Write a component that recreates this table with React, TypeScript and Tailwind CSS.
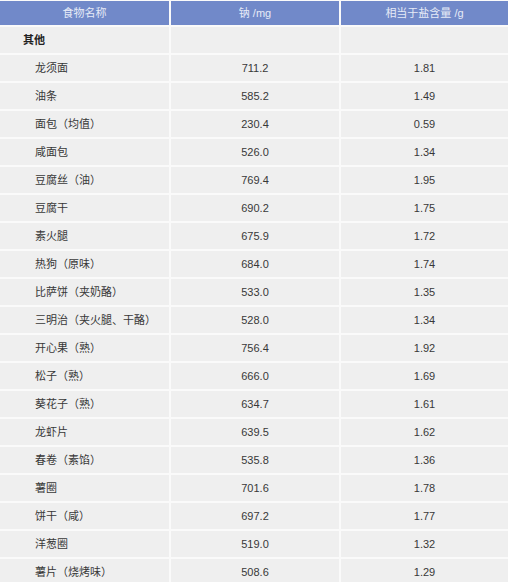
import React from "react";

const rows: [string, string, string][] = [
  ["龙须面", "711.2", "1.81"],
  ["油条", "585.2", "1.49"],
  ["面包（均值）", "230.4", "0.59"],
  ["咸面包", "526.0", "1.34"],
  ["豆腐丝（油）", "769.4", "1.95"],
  ["豆腐干", "690.2", "1.75"],
  ["素火腿", "675.9", "1.72"],
  ["热狗（原味）", "684.0", "1.74"],
  ["比萨饼（夹奶酪）", "533.0", "1.35"],
  ["三明治（夹火腿、干酪）", "528.0", "1.34"],
  ["开心果（熟）", "756.4", "1.92"],
  ["松子（熟）", "666.0", "1.69"],
  ["葵花子（熟）", "634.7", "1.61"],
  ["龙虾片", "639.5", "1.62"],
  ["春卷（素馅）", "535.8", "1.36"],
  ["薯圈", "701.6", "1.78"],
  ["饼干（咸）", "697.2", "1.77"],
  ["洋葱圈", "519.0", "1.32"],
  ["薯片（烧烤味）", "508.6", "1.29"],
];

export default function App() {
  return (
    <div
      className="w-[508px] h-[582px] overflow-hidden bg-[#fafafa] text-[11px] text-[#383838]"
      style={{ fontFamily: '"Liberation Sans", "Noto Sans CJK SC", sans-serif' }}
    >
      <div className="grid grid-cols-[169px_168px_167px] gap-x-[2px] gap-y-[2px] pt-[1px]">
        <div className="h-[24px] bg-[#7189c9] text-[#e6ebf7] flex items-center justify-center">食物名称</div>
        <div className="h-[24px] bg-[#7189c9] text-[#e6ebf7] flex items-center justify-center">钠 /mg</div>
        <div className="h-[24px] bg-[#7189c9] text-[#e6ebf7] flex items-center justify-center">相当于盐含量 /g</div>

        <div className="h-[26px] bg-[#efefef] flex items-center pl-[23px] font-bold text-[#222]">其他</div>
        <div className="h-[26px] bg-[#efefef]"></div>
        <div className="h-[26px] bg-[#efefef]"></div>

        {rows.map(([name, na, salt]) => (
          <React.Fragment key={name}>
            <div className="h-[26px] bg-[#efefef] flex items-center pl-[35px] whitespace-nowrap">{name}</div>
            <div className="h-[26px] bg-[#efefef] flex items-center justify-center">{na}</div>
            <div className="h-[26px] bg-[#efefef] flex items-center justify-center">{salt}</div>
          </React.Fragment>
        ))}
      </div>
    </div>
  );
}
